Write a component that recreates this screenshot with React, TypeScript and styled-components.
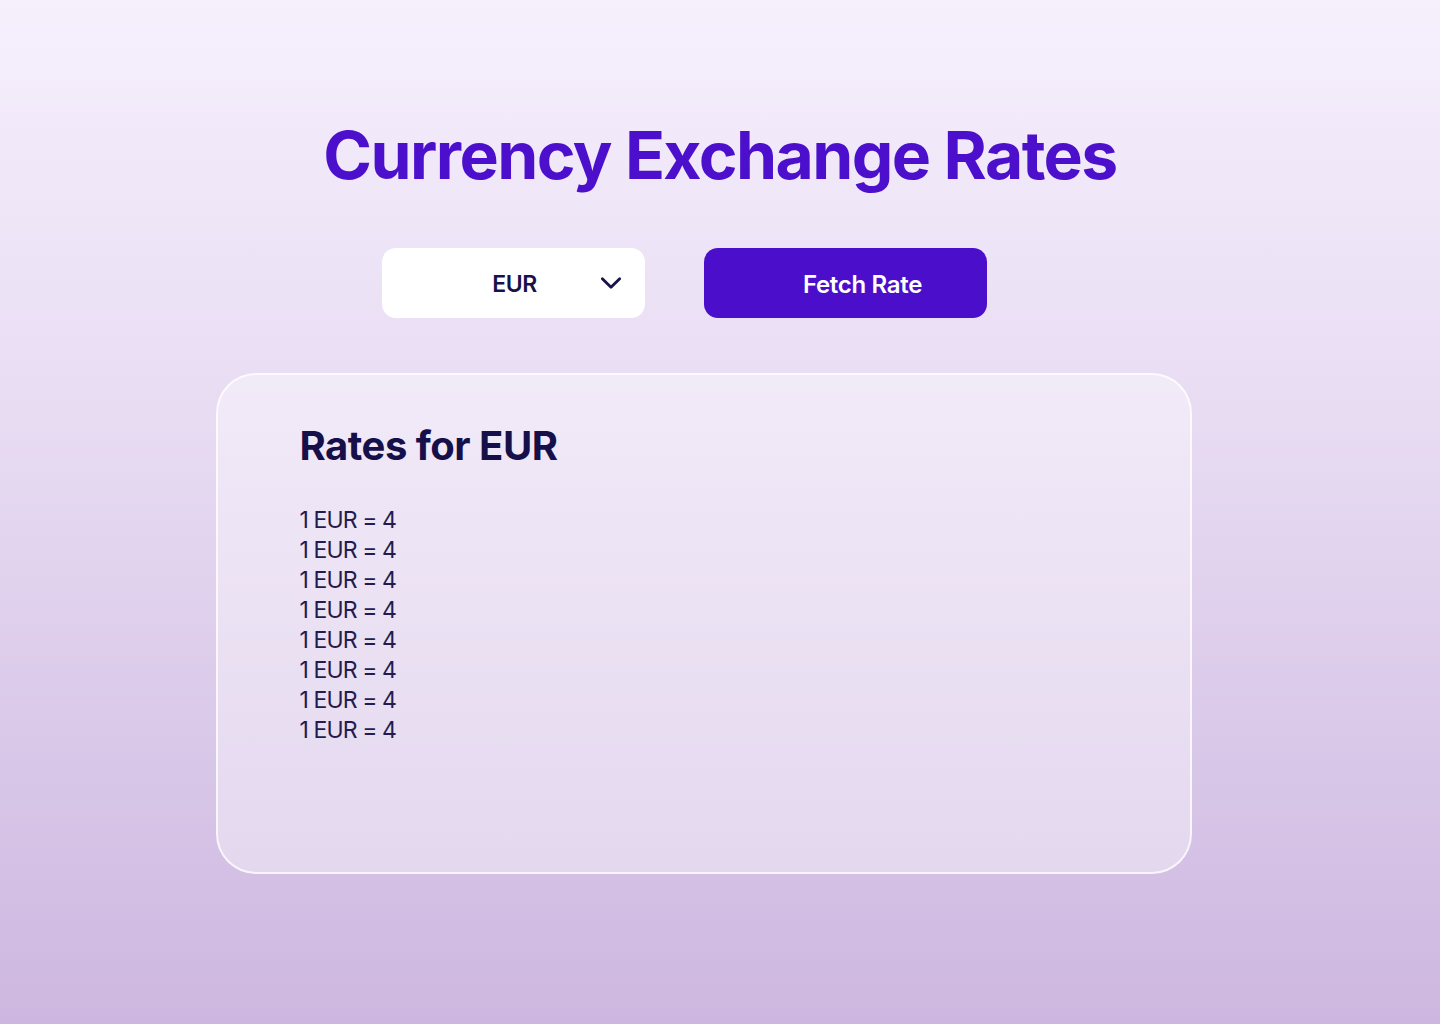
import React, { useState } from "react";
import styled, { createGlobalStyle } from "styled-components";

const GlobalStyle = createGlobalStyle`
  html, body {
    margin: 0;
    padding: 0;
  }
  body {
    font-family: Inter, "Noto Sans", sans-serif;
    background: linear-gradient(180deg, #f6f0fd 0%, #e8dcf3 40%, #cdb7e0 100%);
    min-height: 1024px;
  }
`;

const Page = styled.main`
  min-height: 1024px;
  display: flex;
  flex-direction: column;
  align-items: center;
  padding-top: 115px;
  box-sizing: border-box;
`;

const Title = styled.h1`
  margin: 0;
  font-size: 66px;
  line-height: 80px;
  font-weight: 700;
  letter-spacing: -1.6px;
  color: #4c10cc;
`;

const Controls = styled.div`
  display: flex;
  gap: 59px;
  margin-top: 53px;
  margin-right: 71px;
`;

const SelectBox = styled.div`
  position: relative;
  width: 263px;
  height: 70px;
  background: #ffffff;
  border-radius: 14px;
  display: flex;
  align-items: center;
  justify-content: center;
  box-sizing: border-box;
`;

const SelectValue = styled.span`
  font-size: 23px;
  font-weight: 600;
  letter-spacing: -0.5px;
  color: #17124a;
  margin-left: 2px;
  padding-top: 2px;
`;

const Chevron = styled.svg`
  position: absolute;
  right: 21px;
  top: 50%;
  transform: translateY(-50%);
`;

const FetchButton = styled.button`
  width: 283px;
  height: 70px;
  border: none;
  border-radius: 14px;
  background: #4b0fcb;
  color: #ffffff;
  font-family: Inter, "Noto Sans", sans-serif;
  font-size: 24px;
  font-weight: 600;
  letter-spacing: -0.3px;
  padding: 2px 0 0 34px;
  cursor: pointer;
`;

const Card = styled.section`
  margin-top: 55px;
  margin-left: -33px;
  width: 976px;
  height: 501px;
  box-sizing: border-box;
  border-radius: 40px;
  border: 2px solid rgba(255, 255, 255, 0.75);
  background: rgba(255, 255, 255, 0.38);
  padding: 46px 82px;
`;

const CardTitle = styled.h2`
  margin: 0;
  font-size: 40px;
  line-height: 50px;
  font-weight: 700;
  letter-spacing: -0.5px;
  color: #15104a;
`;

const RateList = styled.ul`
  list-style: none;
  margin: 34px 0 0;
  padding: 0;
`;

const RateItem = styled.li`
  font-size: 23px;
  line-height: 30px;
  font-weight: 400;
  letter-spacing: -0.9px;
  color: #221c50;
`;

const rates = Array.from({ length: 8 }, () => ({ base: "EUR", value: 4 }));

export default function App() {
  const [currency] = useState("EUR");

  return (
    <>
      <GlobalStyle />
      <Page>
        <Title>Currency Exchange Rates</Title>
        <Controls>
          <SelectBox>
            <SelectValue>{currency}</SelectValue>
            <Chevron width="26" height="26" viewBox="0 0 24 24" fill="none">
              <path
                d="M4 8l8 8 8-8"
                stroke="#17124a"
                strokeWidth="2.6"
                strokeLinecap="round"
                strokeLinejoin="round"
              />
            </Chevron>
          </SelectBox>
          <FetchButton>Fetch Rate</FetchButton>
        </Controls>
        <Card>
          <CardTitle>Rates for {currency}</CardTitle>
          <RateList>
            {rates.map((r, i) => (
              <RateItem key={i}>
                1 {r.base} = {r.value}
              </RateItem>
            ))}
          </RateList>
        </Card>
      </Page>
    </>
  );
}
